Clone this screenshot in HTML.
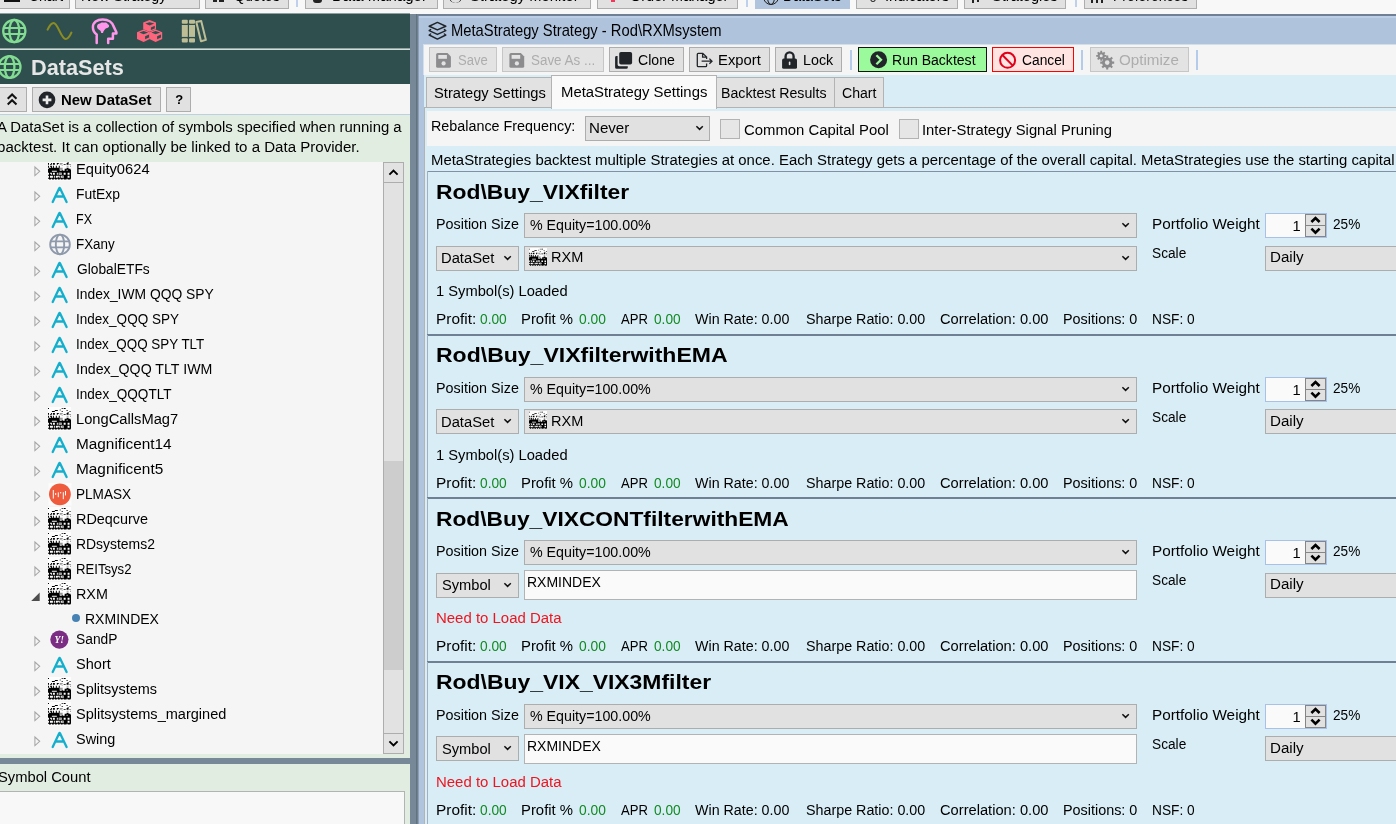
<!DOCTYPE html>
<html lang="en"><head><meta charset="utf-8"><title>MetaStrategy Strategy - Rod\RXMsystem</title>
<style>
html,body{margin:0;padding:0}
body{width:1396px;height:824px;overflow:hidden;position:relative;background:#f8f8f8;font-family:"Liberation Sans",sans-serif;font-size:14.67px;color:#000}
div,span,svg{position:absolute;box-sizing:border-box}
.t{white-space:pre;line-height:20px}
.b{background:#e1e1e1;border:1px solid #adadad}
.bd{background:#e3e3e3;border:1px solid #c6c6c6}
.sep{width:2px;background:#b4cbe9}
.clip{overflow:hidden}
#app{left:0;top:0;width:1396px;height:824px;overflow:hidden;will-change:transform}

</style></head>
<body>
<div id="app">
<!-- top app bar -->
<div class="b" style="left:-5px;top:-20px;width:75px;height:29px;"></div>
<span class="t" style="left:28.6px;top:-14.1px;font-size:14.67px;transform:scaleX(0.9506);transform-origin:0 0;">Chart</span>
<div class="b" style="left:75px;top:-20px;width:125px;height:29px;"></div>
<span class="t" style="left:81.0px;top:-14.1px;font-size:14.67px;transform:scaleX(0.9698);transform-origin:0 0;">New Strategy</span>
<div class="b" style="left:205px;top:-20px;width:84px;height:29px;"></div>
<span class="t" style="left:234.0px;top:-14.1px;font-size:14.67px;transform:scaleX(0.9696);transform-origin:0 0;">Quotes</span>
<div class="b" style="left:305px;top:-20px;width:133px;height:29px;"></div>
<span class="t" style="left:332.0px;top:-14.1px;font-size:14.67px;transform:scaleX(1.0218);transform-origin:0 0;">Data Manager</span>
<div class="b" style="left:443px;top:-20px;width:148px;height:29px;"></div>
<span class="t" style="left:470.3px;top:-14.1px;font-size:14.67px;transform:scaleX(1.0098);transform-origin:0 0;">Strategy Monitor</span>
<div class="b" style="left:597px;top:-20px;width:141px;height:29px;"></div>
<span class="t" style="left:629.5px;top:-14.1px;font-size:14.67px;transform:scaleX(0.9900);transform-origin:0 0;">Order Manager</span>
<div class="b" style="left:755px;top:-20px;width:95px;height:29px;background:#b0c4de;border-color:#b0c4de;"></div>
<span class="t" style="left:783.0px;top:-14.1px;font-size:14.67px;transform:scaleX(0.9668);transform-origin:0 0;">DataSets</span>
<div class="b" style="left:856px;top:-20px;width:102px;height:29px;"></div>
<span class="t" style="left:884.5px;top:-14.1px;font-size:14.67px;transform:scaleX(1.0078);transform-origin:0 0;">Indicators</span>
<div class="b" style="left:964px;top:-20px;width:102px;height:29px;"></div>
<span class="t" style="left:992.0px;top:-14.1px;font-size:14.67px;transform:scaleX(0.9945);transform-origin:0 0;">Strategies</span>
<div class="b" style="left:1084px;top:-20px;width:113px;height:29px;"></div>
<span class="t" style="left:1112.7px;top:-14.1px;font-size:14.67px;transform:scaleX(0.9512);transform-origin:0 0;">Preferences</span>
<div class="sep" style="left:296px;top:-10px;width:2px;height:17px;background:#bfd0ea"></div>
<div class="sep" style="left:746px;top:-10px;width:2px;height:17px;background:#bfd0ea"></div>
<div class="sep" style="left:1075px;top:-10px;width:2px;height:17px;background:#bfd0ea"></div>
<div style="left:4px;top:0px;width:16px;height:2px;background:#111"></div>
<div style="left:213px;top:0px;width:4px;height:2px;background:#222"></div>
<div style="left:219px;top:0px;width:5px;height:2px;background:#222"></div>
<div style="left:313px;top:0px;width:9px;height:3px;background:#222;border-radius:0 0 4px 4px"></div>
<div style="left:611px;top:0px;width:4px;height:2px;background:#f0385a"></div>
<div style="left:763px;top:-11px;width:16px;height:16px;border:1.6px solid #222;border-radius:50%"></div>
<div style="left:767px;top:-11px;width:8px;height:16px;border:1.3px solid #222;border-radius:50%"></div>
<div style="left:449px;top:-9px;width:13px;height:12px;border:1.4px solid #222;border-top:none;border-bottom:none;border-radius:50%"></div>
<div style="left:870px;top:-6px;width:6px;height:8px;border:1.5px solid #222;border-radius:50%"></div>
<div style="left:972px;top:0px;width:1.5px;height:3px;background:#222"></div>
<div style="left:977px;top:0px;width:1.5px;height:2px;background:#222"></div>
<div style="left:1091px;top:0px;width:2px;height:3px;background:#222"></div>
<div style="left:1096px;top:0px;width:2px;height:3px;background:#222"></div>
<div style="left:1101px;top:0px;width:2px;height:3px;background:#222"></div>
<!-- left panel -->
<div style="left:0px;top:13px;width:410px;height:1px;background:#8da0a0"></div>
<div style="left:0px;top:14px;width:410px;height:70px;background:#2f4f4f"></div>
<div style="left:0px;top:48px;width:410px;height:1px;background:#90a4a2"></div>
<div style="left:0px;top:49px;width:410px;height:1px;background:#d3dcd9"></div>
<svg style="left:0;top:14px" width="230" height="70" viewBox="0 14 230 70" fill="none">
<g stroke="#82dc91" stroke-width="2.3"><circle cx="14.3" cy="31" r="11.1"/><ellipse cx="14.3" cy="31" rx="4.9" ry="11.1"/><path d="M4 28H24.6M4 34H24.6" stroke-width="2"/></g>
<path d="M47.6 29.6C49.5 25.6 51.5 23 53.6 23C57.8 23 61.2 39 65.6 39C67.8 39 69.7 36.4 71.4 32.6" stroke="#8c8c22" stroke-width="2.1" stroke-linecap="round"/>
<path d="M96.7 42.9V34.4C94.2 32.6 92.9 30 92.9 27.2C92.9 22.6 97 19.4 102.6 19.4C108.6 19.4 112.6 22.6 113.6 26.4L116.4 32.2V33.4H112.9V38.8H108.2V42.9" stroke="#ff96eb" stroke-width="2.5" stroke-linecap="round" stroke-linejoin="round"/>
<path d="M97 26.6C97 24.6 98.6 23.6 100 23.6C100.8 22.4 103 22.2 104 22.8C105.6 22.2 107.4 23 107.8 24.2C109.4 24.6 109.6 26.8 108.2 27.6C106.8 28.2 105.6 28.4 104.8 29.6C104 30.8 103.4 31 103 33H101.2C101 31.4 100.4 30.6 99.4 30C97.8 29.2 97 28.2 97 26.6Z" fill="#ff96eb"/>
<g fill="#ff647d">
<path fill-rule="evenodd" d="M149.6 20L156 22.5V29.3L149.6 31.8L143.2 29.3V22.5ZM149.6 22.2L145.3 23.6L149.6 25.4L154.2 23.6ZM150.9 27.4V30L154.8 28.6V25.8Z"/>
<path fill-rule="evenodd" d="M143.6 29.6L149.8 32.2V38.9L143.6 42.1L137 38.9V32.2ZM143.6 31L139.3 32.5L143.6 34.2L148.2 32.5ZM145.1 36.2V39.2L149 37.6V34.6Z"/>
<path fill-rule="evenodd" d="M155.6 29.6L162.2 32.2V38.9L155.6 42.1L149.4 38.9V32.2ZM155.6 31L151.3 32.5L155.6 34.2L160.2 32.5ZM157.1 36.2V39.2L161 37.6V34.6Z"/>
</g>
<g fill="#bebe96"><rect x="181.8" y="19.8" width="6" height="3.9" rx="1"/><rect x="181.8" y="25" width="6" height="11.9"/><rect x="181.8" y="38.2" width="6" height="4.3" rx="1"/>
<rect x="189" y="19.8" width="6" height="3.9" rx="1"/><rect x="189" y="25" width="6" height="11.9"/><rect x="189" y="38.2" width="6" height="4.3" rx="1"/></g>
<path d="M196.3 22L201.2 20.9L205.9 39.9L201 41.2Z" stroke="#bebe96" stroke-width="2" stroke-linejoin="round"/>
<g stroke="#82dc91" stroke-width="2.3"><circle cx="9.6" cy="67" r="10.9"/><ellipse cx="9.6" cy="67" rx="4.8" ry="10.9"/><path d="M-1 64H20M-1 70H20" stroke-width="2"/></g>
</svg>
<span class="t" style="left:31.0px;top:58.4px;font-size:21.6px;font-weight:700;color:#e6e6e6;transform:scaleX(1.0054);transform-origin:0 0;">DataSets</span>
<div style="left:0px;top:84px;width:410px;height:30px;background:#f5f5f5"></div>
<div class="b" style="left:-5px;top:87px;width:32px;height:25px;"></div>
<div class="b" style="left:32px;top:87px;width:129px;height:25px;"></div>
<div class="b" style="left:166px;top:87px;width:25px;height:25px;"></div>
<svg style="left:0;top:84px" width="200" height="30" viewBox="0 84 200 30" fill="none">
<path d="M7.7 98.8L12.1 94.5L16.5 98.8M7.7 104.5L12.1 100.2L16.5 104.5" stroke="#111" stroke-width="2"/>
<circle cx="47" cy="99.9" r="8.3" fill="#212529"/><path d="M42.6 99.9H51.4M47 95.5V104.3" stroke="#e9e9e9" stroke-width="2.6"/>
</svg>
<span class="t" style="left:60.8px;top:89.8px;font-size:14.67px;font-weight:700;transform:scaleX(1.0191);transform-origin:0 0;">New DataSet</span>
<span class="t" style="left:175.2px;top:89.8px;font-size:13px;font-weight:700;">?</span>
<div style="left:0px;top:114px;width:410px;height:1px;background:#bcd0e2"></div>
<div style="left:0px;top:115px;width:410px;height:709px;background:#e1ede1"></div>
<span class="t" style="left:-3.0px;top:117.1px;font-size:14.67px;transform:scaleX(1.0157);transform-origin:0 0;">A DataSet is a collection of symbols specified when running a</span>
<span class="t" style="left:-2.6px;top:137.1px;font-size:14.67px;transform:scaleX(1.0282);transform-origin:0 0;">backtest. It can optionally be linked to a Data Provider.</span>
<!-- dataset tree -->
<div style="left:0px;top:162px;width:405px;height:592px;background:#e8e8e8"></div>
<div style="left:0px;top:162px;width:383px;height:592px;background:#f5f5f5;overflow:hidden"><svg width="10" height="14" viewBox="0 0 10 14" fill="none" style="left:33px;top:2.0px"><path d="M1.9 3V11.6L6.7 7.3Z" stroke="#a6a6a6" stroke-width="1.05"/></svg><svg width="23.5" height="23.6" viewBox="0 0 24 24" preserveAspectRatio="none" style="left:47.6px;top:-5.0px"><rect width="24" height="24" fill="#fdfdfd"/><path fill="#000" d="M0 1h1v1h-1zM14 1h1v1h-1zM16 1h2v1h-2zM7 3h3v1h-3zM19 3h1v1h-1zM4 4h3v1h-3zM14 4h1v1h-1zM22 4h1v1h-1zM20 5h1v1h-1zM0 6h1v1h-1zM3 6h1v1h-1zM5 6h2v1h-2zM9 6h2v1h-2zM19 6h2v1h-2zM0 7h1v1h-1zM2 7h2v1h-2zM5 7h2v1h-2zM9 7h1v1h-1zM16 7h2v1h-2zM19 7h2v1h-2zM22 7h1v1h-1zM0 9h1v1h-1zM2 9h2v1h-2zM5 9h1v1h-1zM8 9h1v1h-1zM11 9h1v1h-1zM23 9h1v1h-1zM0 10h1v1h-1zM3 10h1v1h-1zM5 10h1v1h-1zM8 10h1v1h-1zM11 10h1v1h-1zM1 11h11v1h-11zM19 11h2v1h-2zM0 12h12v1h-12zM17 12h6v1h-6zM0 13h12v1h-12zM14 13h1v1h-1zM17 13h2v1h-2zM20 13h4v1h-4zM0 14h4v1h-4zM9 14h15v1h-15zM0 15h24v1h-24zM1 16h1v1h-1zM4 16h1v1h-1zM7 16h2v1h-2zM10 16h1v1h-1zM14 16h2v1h-2zM18 16h2v1h-2zM22 16h2v1h-2zM1 17h2v1h-2zM4 17h1v1h-1zM7 17h2v1h-2zM10 17h1v1h-1zM14 17h2v1h-2zM18 17h2v1h-2zM22 17h2v1h-2zM0 18h24v1h-24zM1 19h1v1h-1zM5 19h1v1h-1zM7 19h1v1h-1zM12 19h1v1h-1zM16 19h4v1h-4zM22 19h2v1h-2zM1 20h1v1h-1zM5 20h1v1h-1zM7 20h1v1h-1zM10 20h1v1h-1zM12 20h1v1h-1zM16 20h4v1h-4zM22 20h2v1h-2zM0 21h24v1h-24zM1 22h2v1h-2zM4 22h2v1h-2zM7 22h2v1h-2zM10 22h2v1h-2zM13 22h2v1h-2zM16 22h3v1h-3zM20 22h3v1h-3z"/><path fill="#999" d="M12 2h1v1h-1zM12 3h1v1h-1zM12 6h3v1h-3zM12 7h2v1h-2zM14 8h1v1h-1zM19 9h2v1h-2zM12 11h3v1h-3zM12 12h3v1h-3zM13 13h1v1h-1zM11 16h3v1h-3zM11 17h3v1h-3zM14 19h2v1h-2zM14 20h2v1h-2z"/></svg><span class="t" style="left:75.5px;top:-3.1px;font-size:14.67px;transform:scaleX(1.0029);transform-origin:0 0;">Equity0624</span><svg width="10" height="14" viewBox="0 0 10 14" fill="none" style="left:33px;top:27.0px"><path d="M1.9 3V11.6L6.7 7.3Z" stroke="#a6a6a6" stroke-width="1.05"/></svg><svg width="24" height="24" viewBox="0 0 24 24" fill="none" style="left:47.7px;top:20.1px"><path d="M4.7 20L11.1 6.6Q11.6 5.4 12.1 6.6L18.6 20M7.8 14.5H15.4" stroke="#14afcd" stroke-width="2.3" stroke-linecap="round" stroke-linejoin="round"/></svg><span class="t" style="left:75.6px;top:21.9px;font-size:14.67px;transform:scaleX(0.9475);transform-origin:0 0;">FutExp</span><svg width="10" height="14" viewBox="0 0 10 14" fill="none" style="left:33px;top:52.0px"><path d="M1.9 3V11.6L6.7 7.3Z" stroke="#a6a6a6" stroke-width="1.05"/></svg><svg width="24" height="24" viewBox="0 0 24 24" fill="none" style="left:47.7px;top:45.1px"><path d="M4.7 20L11.1 6.6Q11.6 5.4 12.1 6.6L18.6 20M7.8 14.5H15.4" stroke="#14afcd" stroke-width="2.3" stroke-linecap="round" stroke-linejoin="round"/></svg><span class="t" style="left:75.6px;top:46.9px;font-size:14.67px;transform:scaleX(0.8522);transform-origin:0 0;">FX</span><svg width="10" height="14" viewBox="0 0 10 14" fill="none" style="left:33px;top:77.0px"><path d="M1.9 3V11.6L6.7 7.3Z" stroke="#a6a6a6" stroke-width="1.05"/></svg><svg width="24" height="24" viewBox="0 0 24 24" fill="none" style="left:47.5px;top:70.0px"><g stroke="#8e9aab" stroke-width="1.9"><circle cx="12" cy="12.4" r="9.8"/><ellipse cx="12" cy="12.4" rx="4.2" ry="9.8"/><path d="M2.8 9.4H21.2M2.8 15.4H21.2"/></g></svg><span class="t" style="left:75.6px;top:71.9px;font-size:14.67px;transform:scaleX(0.9136);transform-origin:0 0;">FXany</span><svg width="10" height="14" viewBox="0 0 10 14" fill="none" style="left:33px;top:102.0px"><path d="M1.9 3V11.6L6.7 7.3Z" stroke="#a6a6a6" stroke-width="1.05"/></svg><svg width="24" height="24" viewBox="0 0 24 24" fill="none" style="left:47.7px;top:95.1px"><path d="M4.7 20L11.1 6.6Q11.6 5.4 12.1 6.6L18.6 20M7.8 14.5H15.4" stroke="#14afcd" stroke-width="2.3" stroke-linecap="round" stroke-linejoin="round"/></svg><span class="t" style="left:76.5px;top:96.9px;font-size:14.67px;transform:scaleX(0.9397);transform-origin:0 0;">GlobalETFs</span><svg width="10" height="14" viewBox="0 0 10 14" fill="none" style="left:33px;top:127.0px"><path d="M1.9 3V11.6L6.7 7.3Z" stroke="#a6a6a6" stroke-width="1.05"/></svg><svg width="24" height="24" viewBox="0 0 24 24" fill="none" style="left:47.7px;top:120.1px"><path d="M4.7 20L11.1 6.6Q11.6 5.4 12.1 6.6L18.6 20M7.8 14.5H15.4" stroke="#14afcd" stroke-width="2.3" stroke-linecap="round" stroke-linejoin="round"/></svg><span class="t" style="left:75.6px;top:121.9px;font-size:14.67px;transform:scaleX(0.9454);transform-origin:0 0;">Index_IWM QQQ SPY</span><svg width="10" height="14" viewBox="0 0 10 14" fill="none" style="left:33px;top:152.0px"><path d="M1.9 3V11.6L6.7 7.3Z" stroke="#a6a6a6" stroke-width="1.05"/></svg><svg width="24" height="24" viewBox="0 0 24 24" fill="none" style="left:47.7px;top:145.1px"><path d="M4.7 20L11.1 6.6Q11.6 5.4 12.1 6.6L18.6 20M7.8 14.5H15.4" stroke="#14afcd" stroke-width="2.3" stroke-linecap="round" stroke-linejoin="round"/></svg><span class="t" style="left:75.6px;top:146.9px;font-size:14.67px;transform:scaleX(0.9231);transform-origin:0 0;">Index_QQQ SPY</span><svg width="10" height="14" viewBox="0 0 10 14" fill="none" style="left:33px;top:177.0px"><path d="M1.9 3V11.6L6.7 7.3Z" stroke="#a6a6a6" stroke-width="1.05"/></svg><svg width="24" height="24" viewBox="0 0 24 24" fill="none" style="left:47.7px;top:170.1px"><path d="M4.7 20L11.1 6.6Q11.6 5.4 12.1 6.6L18.6 20M7.8 14.5H15.4" stroke="#14afcd" stroke-width="2.3" stroke-linecap="round" stroke-linejoin="round"/></svg><span class="t" style="left:75.6px;top:171.9px;font-size:14.67px;transform:scaleX(0.9156);transform-origin:0 0;">Index_QQQ SPY TLT</span><svg width="10" height="14" viewBox="0 0 10 14" fill="none" style="left:33px;top:202.0px"><path d="M1.9 3V11.6L6.7 7.3Z" stroke="#a6a6a6" stroke-width="1.05"/></svg><svg width="24" height="24" viewBox="0 0 24 24" fill="none" style="left:47.7px;top:195.1px"><path d="M4.7 20L11.1 6.6Q11.6 5.4 12.1 6.6L18.6 20M7.8 14.5H15.4" stroke="#14afcd" stroke-width="2.3" stroke-linecap="round" stroke-linejoin="round"/></svg><span class="t" style="left:75.5px;top:196.9px;font-size:14.67px;transform:scaleX(0.9675);transform-origin:0 0;">Index_QQQ TLT IWM</span><svg width="10" height="14" viewBox="0 0 10 14" fill="none" style="left:33px;top:227.0px"><path d="M1.9 3V11.6L6.7 7.3Z" stroke="#a6a6a6" stroke-width="1.05"/></svg><svg width="24" height="24" viewBox="0 0 24 24" fill="none" style="left:47.7px;top:220.1px"><path d="M4.7 20L11.1 6.6Q11.6 5.4 12.1 6.6L18.6 20M7.8 14.5H15.4" stroke="#14afcd" stroke-width="2.3" stroke-linecap="round" stroke-linejoin="round"/></svg><span class="t" style="left:75.6px;top:221.9px;font-size:14.67px;transform:scaleX(0.9255);transform-origin:0 0;">Index_QQQTLT</span><svg width="10" height="14" viewBox="0 0 10 14" fill="none" style="left:33px;top:252.0px"><path d="M1.9 3V11.6L6.7 7.3Z" stroke="#a6a6a6" stroke-width="1.05"/></svg><svg width="23.5" height="23.6" viewBox="0 0 24 24" preserveAspectRatio="none" style="left:47.6px;top:245.0px"><rect width="24" height="24" fill="#fdfdfd"/><path fill="#000" d="M0 1h1v1h-1zM14 1h1v1h-1zM16 1h2v1h-2zM7 3h3v1h-3zM19 3h1v1h-1zM4 4h3v1h-3zM14 4h1v1h-1zM22 4h1v1h-1zM20 5h1v1h-1zM0 6h1v1h-1zM3 6h1v1h-1zM5 6h2v1h-2zM9 6h2v1h-2zM19 6h2v1h-2zM0 7h1v1h-1zM2 7h2v1h-2zM5 7h2v1h-2zM9 7h1v1h-1zM16 7h2v1h-2zM19 7h2v1h-2zM22 7h1v1h-1zM0 9h1v1h-1zM2 9h2v1h-2zM5 9h1v1h-1zM8 9h1v1h-1zM11 9h1v1h-1zM23 9h1v1h-1zM0 10h1v1h-1zM3 10h1v1h-1zM5 10h1v1h-1zM8 10h1v1h-1zM11 10h1v1h-1zM1 11h11v1h-11zM19 11h2v1h-2zM0 12h12v1h-12zM17 12h6v1h-6zM0 13h12v1h-12zM14 13h1v1h-1zM17 13h2v1h-2zM20 13h4v1h-4zM0 14h4v1h-4zM9 14h15v1h-15zM0 15h24v1h-24zM1 16h1v1h-1zM4 16h1v1h-1zM7 16h2v1h-2zM10 16h1v1h-1zM14 16h2v1h-2zM18 16h2v1h-2zM22 16h2v1h-2zM1 17h2v1h-2zM4 17h1v1h-1zM7 17h2v1h-2zM10 17h1v1h-1zM14 17h2v1h-2zM18 17h2v1h-2zM22 17h2v1h-2zM0 18h24v1h-24zM1 19h1v1h-1zM5 19h1v1h-1zM7 19h1v1h-1zM12 19h1v1h-1zM16 19h4v1h-4zM22 19h2v1h-2zM1 20h1v1h-1zM5 20h1v1h-1zM7 20h1v1h-1zM10 20h1v1h-1zM12 20h1v1h-1zM16 20h4v1h-4zM22 20h2v1h-2zM0 21h24v1h-24zM1 22h2v1h-2zM4 22h2v1h-2zM7 22h2v1h-2zM10 22h2v1h-2zM13 22h2v1h-2zM16 22h3v1h-3zM20 22h3v1h-3z"/><path fill="#999" d="M12 2h1v1h-1zM12 3h1v1h-1zM12 6h3v1h-3zM12 7h2v1h-2zM14 8h1v1h-1zM19 9h2v1h-2zM12 11h3v1h-3zM12 12h3v1h-3zM13 13h1v1h-1zM11 16h3v1h-3zM11 17h3v1h-3zM14 19h2v1h-2zM14 20h2v1h-2z"/></svg><span class="t" style="left:75.5px;top:246.9px;font-size:14.67px;transform:scaleX(1.0031);transform-origin:0 0;">LongCallsMag7</span><svg width="10" height="14" viewBox="0 0 10 14" fill="none" style="left:33px;top:277.0px"><path d="M1.9 3V11.6L6.7 7.3Z" stroke="#a6a6a6" stroke-width="1.05"/></svg><svg width="24" height="24" viewBox="0 0 24 24" fill="none" style="left:47.7px;top:270.1px"><path d="M4.7 20L11.1 6.6Q11.6 5.4 12.1 6.6L18.6 20M7.8 14.5H15.4" stroke="#14afcd" stroke-width="2.3" stroke-linecap="round" stroke-linejoin="round"/></svg><span class="t" style="left:75.5px;top:271.9px;font-size:14.67px;transform:scaleX(1.0477);transform-origin:0 0;">Magnificent14</span><svg width="10" height="14" viewBox="0 0 10 14" fill="none" style="left:33px;top:302.0px"><path d="M1.9 3V11.6L6.7 7.3Z" stroke="#a6a6a6" stroke-width="1.05"/></svg><svg width="24" height="24" viewBox="0 0 24 24" fill="none" style="left:47.7px;top:295.1px"><path d="M4.7 20L11.1 6.6Q11.6 5.4 12.1 6.6L18.6 20M7.8 14.5H15.4" stroke="#14afcd" stroke-width="2.3" stroke-linecap="round" stroke-linejoin="round"/></svg><span class="t" style="left:75.5px;top:296.9px;font-size:14.67px;transform:scaleX(1.0494);transform-origin:0 0;">Magnificent5</span><svg width="10" height="14" viewBox="0 0 10 14" fill="none" style="left:33px;top:327.0px"><path d="M1.9 3V11.6L6.7 7.3Z" stroke="#a6a6a6" stroke-width="1.05"/></svg><svg width="24" height="24" viewBox="0 0 24 24" style="left:47.5px;top:320.0px"><rect x=".5" y="1" width="23" height="22.6" fill="#fbfbfb"/><circle cx="11.9" cy="12.3" r="10.9" fill="#ee5b3d"/><path d="M5.3 8V16.6M7.7 11V13M10.3 10.4V15.2M12.7 10V11.4M15.3 10.2V17.2M17.5 9V13.4" stroke="#fff" stroke-width="1"/></svg><span class="t" style="left:75.6px;top:321.9px;font-size:14.67px;transform:scaleX(0.9270);transform-origin:0 0;">PLMASX</span><svg width="10" height="14" viewBox="0 0 10 14" fill="none" style="left:33px;top:352.0px"><path d="M1.9 3V11.6L6.7 7.3Z" stroke="#a6a6a6" stroke-width="1.05"/></svg><svg width="23.5" height="23.6" viewBox="0 0 24 24" preserveAspectRatio="none" style="left:47.6px;top:345.0px"><rect width="24" height="24" fill="#fdfdfd"/><path fill="#000" d="M0 1h1v1h-1zM14 1h1v1h-1zM16 1h2v1h-2zM7 3h3v1h-3zM19 3h1v1h-1zM4 4h3v1h-3zM14 4h1v1h-1zM22 4h1v1h-1zM20 5h1v1h-1zM0 6h1v1h-1zM3 6h1v1h-1zM5 6h2v1h-2zM9 6h2v1h-2zM19 6h2v1h-2zM0 7h1v1h-1zM2 7h2v1h-2zM5 7h2v1h-2zM9 7h1v1h-1zM16 7h2v1h-2zM19 7h2v1h-2zM22 7h1v1h-1zM0 9h1v1h-1zM2 9h2v1h-2zM5 9h1v1h-1zM8 9h1v1h-1zM11 9h1v1h-1zM23 9h1v1h-1zM0 10h1v1h-1zM3 10h1v1h-1zM5 10h1v1h-1zM8 10h1v1h-1zM11 10h1v1h-1zM1 11h11v1h-11zM19 11h2v1h-2zM0 12h12v1h-12zM17 12h6v1h-6zM0 13h12v1h-12zM14 13h1v1h-1zM17 13h2v1h-2zM20 13h4v1h-4zM0 14h4v1h-4zM9 14h15v1h-15zM0 15h24v1h-24zM1 16h1v1h-1zM4 16h1v1h-1zM7 16h2v1h-2zM10 16h1v1h-1zM14 16h2v1h-2zM18 16h2v1h-2zM22 16h2v1h-2zM1 17h2v1h-2zM4 17h1v1h-1zM7 17h2v1h-2zM10 17h1v1h-1zM14 17h2v1h-2zM18 17h2v1h-2zM22 17h2v1h-2zM0 18h24v1h-24zM1 19h1v1h-1zM5 19h1v1h-1zM7 19h1v1h-1zM12 19h1v1h-1zM16 19h4v1h-4zM22 19h2v1h-2zM1 20h1v1h-1zM5 20h1v1h-1zM7 20h1v1h-1zM10 20h1v1h-1zM12 20h1v1h-1zM16 20h4v1h-4zM22 20h2v1h-2zM0 21h24v1h-24zM1 22h2v1h-2zM4 22h2v1h-2zM7 22h2v1h-2zM10 22h2v1h-2zM13 22h2v1h-2zM16 22h3v1h-3zM20 22h3v1h-3z"/><path fill="#999" d="M12 2h1v1h-1zM12 3h1v1h-1zM12 6h3v1h-3zM12 7h2v1h-2zM14 8h1v1h-1zM19 9h2v1h-2zM12 11h3v1h-3zM12 12h3v1h-3zM13 13h1v1h-1zM11 16h3v1h-3zM11 17h3v1h-3zM14 19h2v1h-2zM14 20h2v1h-2z"/></svg><span class="t" style="left:75.5px;top:346.9px;font-size:14.67px;transform:scaleX(0.9826);transform-origin:0 0;">RDeqcurve</span><svg width="10" height="14" viewBox="0 0 10 14" fill="none" style="left:33px;top:377.0px"><path d="M1.9 3V11.6L6.7 7.3Z" stroke="#a6a6a6" stroke-width="1.05"/></svg><svg width="23.5" height="23.6" viewBox="0 0 24 24" preserveAspectRatio="none" style="left:47.6px;top:370.0px"><rect width="24" height="24" fill="#fdfdfd"/><path fill="#000" d="M0 1h1v1h-1zM14 1h1v1h-1zM16 1h2v1h-2zM7 3h3v1h-3zM19 3h1v1h-1zM4 4h3v1h-3zM14 4h1v1h-1zM22 4h1v1h-1zM20 5h1v1h-1zM0 6h1v1h-1zM3 6h1v1h-1zM5 6h2v1h-2zM9 6h2v1h-2zM19 6h2v1h-2zM0 7h1v1h-1zM2 7h2v1h-2zM5 7h2v1h-2zM9 7h1v1h-1zM16 7h2v1h-2zM19 7h2v1h-2zM22 7h1v1h-1zM0 9h1v1h-1zM2 9h2v1h-2zM5 9h1v1h-1zM8 9h1v1h-1zM11 9h1v1h-1zM23 9h1v1h-1zM0 10h1v1h-1zM3 10h1v1h-1zM5 10h1v1h-1zM8 10h1v1h-1zM11 10h1v1h-1zM1 11h11v1h-11zM19 11h2v1h-2zM0 12h12v1h-12zM17 12h6v1h-6zM0 13h12v1h-12zM14 13h1v1h-1zM17 13h2v1h-2zM20 13h4v1h-4zM0 14h4v1h-4zM9 14h15v1h-15zM0 15h24v1h-24zM1 16h1v1h-1zM4 16h1v1h-1zM7 16h2v1h-2zM10 16h1v1h-1zM14 16h2v1h-2zM18 16h2v1h-2zM22 16h2v1h-2zM1 17h2v1h-2zM4 17h1v1h-1zM7 17h2v1h-2zM10 17h1v1h-1zM14 17h2v1h-2zM18 17h2v1h-2zM22 17h2v1h-2zM0 18h24v1h-24zM1 19h1v1h-1zM5 19h1v1h-1zM7 19h1v1h-1zM12 19h1v1h-1zM16 19h4v1h-4zM22 19h2v1h-2zM1 20h1v1h-1zM5 20h1v1h-1zM7 20h1v1h-1zM10 20h1v1h-1zM12 20h1v1h-1zM16 20h4v1h-4zM22 20h2v1h-2zM0 21h24v1h-24zM1 22h2v1h-2zM4 22h2v1h-2zM7 22h2v1h-2zM10 22h2v1h-2zM13 22h2v1h-2zM16 22h3v1h-3zM20 22h3v1h-3z"/><path fill="#999" d="M12 2h1v1h-1zM12 3h1v1h-1zM12 6h3v1h-3zM12 7h2v1h-2zM14 8h1v1h-1zM19 9h2v1h-2zM12 11h3v1h-3zM12 12h3v1h-3zM13 13h1v1h-1zM11 16h3v1h-3zM11 17h3v1h-3zM14 19h2v1h-2zM14 20h2v1h-2z"/></svg><span class="t" style="left:75.6px;top:371.9px;font-size:14.67px;transform:scaleX(0.9498);transform-origin:0 0;">RDsystems2</span><svg width="10" height="14" viewBox="0 0 10 14" fill="none" style="left:33px;top:402.0px"><path d="M1.9 3V11.6L6.7 7.3Z" stroke="#a6a6a6" stroke-width="1.05"/></svg><svg width="23.5" height="23.6" viewBox="0 0 24 24" preserveAspectRatio="none" style="left:47.6px;top:395.0px"><rect width="24" height="24" fill="#fdfdfd"/><path fill="#000" d="M0 1h1v1h-1zM14 1h1v1h-1zM16 1h2v1h-2zM7 3h3v1h-3zM19 3h1v1h-1zM4 4h3v1h-3zM14 4h1v1h-1zM22 4h1v1h-1zM20 5h1v1h-1zM0 6h1v1h-1zM3 6h1v1h-1zM5 6h2v1h-2zM9 6h2v1h-2zM19 6h2v1h-2zM0 7h1v1h-1zM2 7h2v1h-2zM5 7h2v1h-2zM9 7h1v1h-1zM16 7h2v1h-2zM19 7h2v1h-2zM22 7h1v1h-1zM0 9h1v1h-1zM2 9h2v1h-2zM5 9h1v1h-1zM8 9h1v1h-1zM11 9h1v1h-1zM23 9h1v1h-1zM0 10h1v1h-1zM3 10h1v1h-1zM5 10h1v1h-1zM8 10h1v1h-1zM11 10h1v1h-1zM1 11h11v1h-11zM19 11h2v1h-2zM0 12h12v1h-12zM17 12h6v1h-6zM0 13h12v1h-12zM14 13h1v1h-1zM17 13h2v1h-2zM20 13h4v1h-4zM0 14h4v1h-4zM9 14h15v1h-15zM0 15h24v1h-24zM1 16h1v1h-1zM4 16h1v1h-1zM7 16h2v1h-2zM10 16h1v1h-1zM14 16h2v1h-2zM18 16h2v1h-2zM22 16h2v1h-2zM1 17h2v1h-2zM4 17h1v1h-1zM7 17h2v1h-2zM10 17h1v1h-1zM14 17h2v1h-2zM18 17h2v1h-2zM22 17h2v1h-2zM0 18h24v1h-24zM1 19h1v1h-1zM5 19h1v1h-1zM7 19h1v1h-1zM12 19h1v1h-1zM16 19h4v1h-4zM22 19h2v1h-2zM1 20h1v1h-1zM5 20h1v1h-1zM7 20h1v1h-1zM10 20h1v1h-1zM12 20h1v1h-1zM16 20h4v1h-4zM22 20h2v1h-2zM0 21h24v1h-24zM1 22h2v1h-2zM4 22h2v1h-2zM7 22h2v1h-2zM10 22h2v1h-2zM13 22h2v1h-2zM16 22h3v1h-3zM20 22h3v1h-3z"/><path fill="#999" d="M12 2h1v1h-1zM12 3h1v1h-1zM12 6h3v1h-3zM12 7h2v1h-2zM14 8h1v1h-1zM19 9h2v1h-2zM12 11h3v1h-3zM12 12h3v1h-3zM13 13h1v1h-1zM11 16h3v1h-3zM11 17h3v1h-3zM14 19h2v1h-2zM14 20h2v1h-2z"/></svg><span class="t" style="left:75.6px;top:396.9px;font-size:14.67px;transform:scaleX(0.8956);transform-origin:0 0;">REITsys2</span><svg width="12" height="12" viewBox="0 0 12 12" style="left:30px;top:428.5px"><path d="M9.7 1.6V10.1H1.2Z" fill="#4d4d4d"/></svg><svg width="23.5" height="23.6" viewBox="0 0 24 24" preserveAspectRatio="none" style="left:47.6px;top:420.0px"><rect width="24" height="24" fill="#fdfdfd"/><path fill="#000" d="M0 1h1v1h-1zM14 1h1v1h-1zM16 1h2v1h-2zM7 3h3v1h-3zM19 3h1v1h-1zM4 4h3v1h-3zM14 4h1v1h-1zM22 4h1v1h-1zM20 5h1v1h-1zM0 6h1v1h-1zM3 6h1v1h-1zM5 6h2v1h-2zM9 6h2v1h-2zM19 6h2v1h-2zM0 7h1v1h-1zM2 7h2v1h-2zM5 7h2v1h-2zM9 7h1v1h-1zM16 7h2v1h-2zM19 7h2v1h-2zM22 7h1v1h-1zM0 9h1v1h-1zM2 9h2v1h-2zM5 9h1v1h-1zM8 9h1v1h-1zM11 9h1v1h-1zM23 9h1v1h-1zM0 10h1v1h-1zM3 10h1v1h-1zM5 10h1v1h-1zM8 10h1v1h-1zM11 10h1v1h-1zM1 11h11v1h-11zM19 11h2v1h-2zM0 12h12v1h-12zM17 12h6v1h-6zM0 13h12v1h-12zM14 13h1v1h-1zM17 13h2v1h-2zM20 13h4v1h-4zM0 14h4v1h-4zM9 14h15v1h-15zM0 15h24v1h-24zM1 16h1v1h-1zM4 16h1v1h-1zM7 16h2v1h-2zM10 16h1v1h-1zM14 16h2v1h-2zM18 16h2v1h-2zM22 16h2v1h-2zM1 17h2v1h-2zM4 17h1v1h-1zM7 17h2v1h-2zM10 17h1v1h-1zM14 17h2v1h-2zM18 17h2v1h-2zM22 17h2v1h-2zM0 18h24v1h-24zM1 19h1v1h-1zM5 19h1v1h-1zM7 19h1v1h-1zM12 19h1v1h-1zM16 19h4v1h-4zM22 19h2v1h-2zM1 20h1v1h-1zM5 20h1v1h-1zM7 20h1v1h-1zM10 20h1v1h-1zM12 20h1v1h-1zM16 20h4v1h-4zM22 20h2v1h-2zM0 21h24v1h-24zM1 22h2v1h-2zM4 22h2v1h-2zM7 22h2v1h-2zM10 22h2v1h-2zM13 22h2v1h-2zM16 22h3v1h-3zM20 22h3v1h-3z"/><path fill="#999" d="M12 2h1v1h-1zM12 3h1v1h-1zM12 6h3v1h-3zM12 7h2v1h-2zM14 8h1v1h-1zM19 9h2v1h-2zM12 11h3v1h-3zM12 12h3v1h-3zM13 13h1v1h-1zM11 16h3v1h-3zM11 17h3v1h-3zM14 19h2v1h-2zM14 20h2v1h-2z"/></svg><span class="t" style="left:75.5px;top:421.9px;font-size:14.67px;transform:scaleX(0.9783);transform-origin:0 0;">RXM</span><div style="left:71.9px;top:452.4px;width:8px;height:8px;border-radius:50%;background:#4682b4"></div><span class="t" style="left:85.0px;top:446.9px;font-size:14.67px;transform:scaleX(0.9558);transform-origin:0 0;">RXMINDEX</span><svg width="10" height="14" viewBox="0 0 10 14" fill="none" style="left:33px;top:472.0px"><path d="M1.9 3V11.6L6.7 7.3Z" stroke="#a6a6a6" stroke-width="1.05"/></svg><svg width="24" height="24" viewBox="0 0 24 24" style="left:47.5px;top:465.0px"><circle cx="11.4" cy="12.6" r="9.1" fill="#7b2d84"/><text x="6.4" y="15.8" font-family="Liberation Serif, serif" font-weight="700" font-size="9.5" font-style="italic" fill="#fff">Y!</text></svg><span class="t" style="left:76.0px;top:466.9px;font-size:14.67px;transform:scaleX(0.9415);transform-origin:0 0;">SandP</span><svg width="10" height="14" viewBox="0 0 10 14" fill="none" style="left:33px;top:497.0px"><path d="M1.9 3V11.6L6.7 7.3Z" stroke="#a6a6a6" stroke-width="1.05"/></svg><svg width="24" height="24" viewBox="0 0 24 24" fill="none" style="left:47.7px;top:490.1px"><path d="M4.7 20L11.1 6.6Q11.6 5.4 12.1 6.6L18.6 20M7.8 14.5H15.4" stroke="#14afcd" stroke-width="2.3" stroke-linecap="round" stroke-linejoin="round"/></svg><span class="t" style="left:76.0px;top:491.9px;font-size:14.67px;transform:scaleX(0.9926);transform-origin:0 0;">Short</span><svg width="10" height="14" viewBox="0 0 10 14" fill="none" style="left:33px;top:522.0px"><path d="M1.9 3V11.6L6.7 7.3Z" stroke="#a6a6a6" stroke-width="1.05"/></svg><svg width="23.5" height="23.6" viewBox="0 0 24 24" preserveAspectRatio="none" style="left:47.6px;top:515.0px"><rect width="24" height="24" fill="#fdfdfd"/><path fill="#000" d="M0 1h1v1h-1zM14 1h1v1h-1zM16 1h2v1h-2zM7 3h3v1h-3zM19 3h1v1h-1zM4 4h3v1h-3zM14 4h1v1h-1zM22 4h1v1h-1zM20 5h1v1h-1zM0 6h1v1h-1zM3 6h1v1h-1zM5 6h2v1h-2zM9 6h2v1h-2zM19 6h2v1h-2zM0 7h1v1h-1zM2 7h2v1h-2zM5 7h2v1h-2zM9 7h1v1h-1zM16 7h2v1h-2zM19 7h2v1h-2zM22 7h1v1h-1zM0 9h1v1h-1zM2 9h2v1h-2zM5 9h1v1h-1zM8 9h1v1h-1zM11 9h1v1h-1zM23 9h1v1h-1zM0 10h1v1h-1zM3 10h1v1h-1zM5 10h1v1h-1zM8 10h1v1h-1zM11 10h1v1h-1zM1 11h11v1h-11zM19 11h2v1h-2zM0 12h12v1h-12zM17 12h6v1h-6zM0 13h12v1h-12zM14 13h1v1h-1zM17 13h2v1h-2zM20 13h4v1h-4zM0 14h4v1h-4zM9 14h15v1h-15zM0 15h24v1h-24zM1 16h1v1h-1zM4 16h1v1h-1zM7 16h2v1h-2zM10 16h1v1h-1zM14 16h2v1h-2zM18 16h2v1h-2zM22 16h2v1h-2zM1 17h2v1h-2zM4 17h1v1h-1zM7 17h2v1h-2zM10 17h1v1h-1zM14 17h2v1h-2zM18 17h2v1h-2zM22 17h2v1h-2zM0 18h24v1h-24zM1 19h1v1h-1zM5 19h1v1h-1zM7 19h1v1h-1zM12 19h1v1h-1zM16 19h4v1h-4zM22 19h2v1h-2zM1 20h1v1h-1zM5 20h1v1h-1zM7 20h1v1h-1zM10 20h1v1h-1zM12 20h1v1h-1zM16 20h4v1h-4zM22 20h2v1h-2zM0 21h24v1h-24zM1 22h2v1h-2zM4 22h2v1h-2zM7 22h2v1h-2zM10 22h2v1h-2zM13 22h2v1h-2zM16 22h3v1h-3zM20 22h3v1h-3z"/><path fill="#999" d="M12 2h1v1h-1zM12 3h1v1h-1zM12 6h3v1h-3zM12 7h2v1h-2zM14 8h1v1h-1zM19 9h2v1h-2zM12 11h3v1h-3zM12 12h3v1h-3zM13 13h1v1h-1zM11 16h3v1h-3zM11 17h3v1h-3zM14 19h2v1h-2zM14 20h2v1h-2z"/></svg><span class="t" style="left:76.0px;top:516.9px;font-size:14.67px;transform:scaleX(0.9850);transform-origin:0 0;">Splitsystems</span><svg width="10" height="14" viewBox="0 0 10 14" fill="none" style="left:33px;top:547.0px"><path d="M1.9 3V11.6L6.7 7.3Z" stroke="#a6a6a6" stroke-width="1.05"/></svg><svg width="23.5" height="23.6" viewBox="0 0 24 24" preserveAspectRatio="none" style="left:47.6px;top:540.0px"><rect width="24" height="24" fill="#fdfdfd"/><path fill="#000" d="M0 1h1v1h-1zM14 1h1v1h-1zM16 1h2v1h-2zM7 3h3v1h-3zM19 3h1v1h-1zM4 4h3v1h-3zM14 4h1v1h-1zM22 4h1v1h-1zM20 5h1v1h-1zM0 6h1v1h-1zM3 6h1v1h-1zM5 6h2v1h-2zM9 6h2v1h-2zM19 6h2v1h-2zM0 7h1v1h-1zM2 7h2v1h-2zM5 7h2v1h-2zM9 7h1v1h-1zM16 7h2v1h-2zM19 7h2v1h-2zM22 7h1v1h-1zM0 9h1v1h-1zM2 9h2v1h-2zM5 9h1v1h-1zM8 9h1v1h-1zM11 9h1v1h-1zM23 9h1v1h-1zM0 10h1v1h-1zM3 10h1v1h-1zM5 10h1v1h-1zM8 10h1v1h-1zM11 10h1v1h-1zM1 11h11v1h-11zM19 11h2v1h-2zM0 12h12v1h-12zM17 12h6v1h-6zM0 13h12v1h-12zM14 13h1v1h-1zM17 13h2v1h-2zM20 13h4v1h-4zM0 14h4v1h-4zM9 14h15v1h-15zM0 15h24v1h-24zM1 16h1v1h-1zM4 16h1v1h-1zM7 16h2v1h-2zM10 16h1v1h-1zM14 16h2v1h-2zM18 16h2v1h-2zM22 16h2v1h-2zM1 17h2v1h-2zM4 17h1v1h-1zM7 17h2v1h-2zM10 17h1v1h-1zM14 17h2v1h-2zM18 17h2v1h-2zM22 17h2v1h-2zM0 18h24v1h-24zM1 19h1v1h-1zM5 19h1v1h-1zM7 19h1v1h-1zM12 19h1v1h-1zM16 19h4v1h-4zM22 19h2v1h-2zM1 20h1v1h-1zM5 20h1v1h-1zM7 20h1v1h-1zM10 20h1v1h-1zM12 20h1v1h-1zM16 20h4v1h-4zM22 20h2v1h-2zM0 21h24v1h-24zM1 22h2v1h-2zM4 22h2v1h-2zM7 22h2v1h-2zM10 22h2v1h-2zM13 22h2v1h-2zM16 22h3v1h-3zM20 22h3v1h-3z"/><path fill="#999" d="M12 2h1v1h-1zM12 3h1v1h-1zM12 6h3v1h-3zM12 7h2v1h-2zM14 8h1v1h-1zM19 9h2v1h-2zM12 11h3v1h-3zM12 12h3v1h-3zM13 13h1v1h-1zM11 16h3v1h-3zM11 17h3v1h-3zM14 19h2v1h-2zM14 20h2v1h-2z"/></svg><span class="t" style="left:76.0px;top:541.9px;font-size:14.67px;transform:scaleX(0.9924);transform-origin:0 0;">Splitsystems_margined</span><svg width="10" height="14" viewBox="0 0 10 14" fill="none" style="left:33px;top:572.0px"><path d="M1.9 3V11.6L6.7 7.3Z" stroke="#a6a6a6" stroke-width="1.05"/></svg><svg width="24" height="24" viewBox="0 0 24 24" fill="none" style="left:47.7px;top:565.1px"><path d="M4.7 20L11.1 6.6Q11.6 5.4 12.1 6.6L18.6 20M7.8 14.5H15.4" stroke="#14afcd" stroke-width="2.3" stroke-linecap="round" stroke-linejoin="round"/></svg><span class="t" style="left:76.0px;top:566.9px;font-size:14.67px;transform:scaleX(0.9857);transform-origin:0 0;">Swing</span></div>
<div style="left:383px;top:162px;width:21px;height:592px;background:#e2e2e2;border:1px solid #adadad"></div>
<div style="left:383px;top:162px;width:21px;height:21px;background:#e2e2e2;border:1px solid #adadad"></div>
<div style="left:383px;top:733px;width:21px;height:21px;background:#e2e2e2;border:1px solid #adadad"></div>
<div style="left:384px;top:461px;width:19px;height:209px;background:#cdcdcd"></div>
<svg style="left:383px;top:161px" width="21" height="593" viewBox="0 0 21 593" fill="none"><path d="M6.4 13.6L10.5 9.6L14.6 13.6" stroke="#000" stroke-width="1.9"/><path d="M6.4 580.4L10.5 584.4L14.6 580.4" stroke="#000" stroke-width="1.9"/></svg>
<div style="left:0px;top:758px;width:410px;height:6px;background:#778899"></div>
<span class="t" style="left:-2.4px;top:766.9px;font-size:14.67px;transform:scaleX(1.0046);transform-origin:0 0;">Symbol Count</span>
<div style="left:-2px;top:791px;width:407px;height:39px;background:#f8f8f8;border:1px solid #b3b3b3"></div>
<div style="left:410px;top:14px;width:6px;height:810px;background:#778899"></div>
<div style="left:416px;top:14px;width:1px;height:810px;background:#62737b"></div>
<!-- strategy window -->
<div style="left:417px;top:14px;width:979px;height:810px;background:#6f8095"></div>
<div style="left:418px;top:16px;width:978px;height:808px;background:#8d9eb5"></div>
<div style="left:419px;top:16px;width:977px;height:808px;background:#b0c4de"></div>
<div style="left:419px;top:16px;width:977px;height:2px;background:#bccde6"></div>
<div style="left:423px;top:18px;width:973px;height:27px;background:#afc3dd"></div>
<svg style="left:426px;top:19px" width="24" height="24" viewBox="426 19 24 24" fill="none" stroke="#212529" stroke-width="1.5" stroke-linejoin="round" stroke-linecap="round"><path d="M437.4 22.4L445.8 26.2L437.4 29.9L429.2 26.2Z"/><path d="M430.6 29.6L429.2 30.6L437.4 34.4L445.8 30.6L444.4 29.6"/><path d="M430.6 34L429.2 35L437.4 39.1L445.8 35L444.4 34"/></svg>
<span class="t" style="left:450.6px;top:20.9px;font-size:15.7px;transform:scaleX(0.9402);transform-origin:0 0;">MetaStrategy Strategy - Rod\RXMsystem</span>
<div style="left:423px;top:44px;width:973px;height:1px;background:#d3deeb"></div>
<div style="left:423px;top:45px;width:973px;height:30px;background:#f5f5f5;border-left:1px solid #d5dfec"></div>
<div class="bd" style="left:429px;top:47px;width:68px;height:25px;"></div>
<div class="bd" style="left:502px;top:47px;width:102px;height:25px;"></div>
<div class="b" style="left:609px;top:47px;width:75px;height:25px;"></div>
<div class="b" style="left:689px;top:47px;width:81px;height:25px;"></div>
<div class="b" style="left:775px;top:47px;width:67px;height:25px;"></div>
<div class="sep" style="left:850px;top:50px;width:2px;height:20px;"></div>
<div style="left:858px;top:47px;width:129px;height:25px;background:#9bfa9b;border:1px solid #151515"></div>
<div style="left:992px;top:47px;width:82px;height:25px;background:#ffe4e1;border:1px solid #ff0000"></div>
<div class="sep" style="left:1081px;top:50px;width:2px;height:20px;"></div>
<div class="bd" style="left:1090px;top:47px;width:99px;height:25px;"></div>
<div class="sep" style="left:1196px;top:50px;width:2px;height:20px;"></div>
<svg style="left:423px;top:44px" width="800" height="31" viewBox="423 44 800 31" fill="none"><path d="M436.1 54.6Q436.1 53 437.70000000000005 53H447.5L450.90000000000003 56.4V66.2Q450.90000000000003 67.8 449.3 67.8H437.70000000000005Q436.1 67.8 436.1 66.2Z" fill="#8c8c8e"/><rect x="438.3" y="55" width="8.6" height="3.8" fill="#e3e3e3"/><circle cx="443.6" cy="63.4" r="2.1" fill="#e3e3e3"/><path d="M509.4 54.6Q509.4 53 511.0 53H520.8L524.1999999999999 56.4V66.2Q524.1999999999999 67.8 522.6 67.8H511.0Q509.4 67.8 509.4 66.2Z" fill="#8c8c8e"/><rect x="511.59999999999997" y="55" width="8.6" height="3.8" fill="#e3e3e3"/><circle cx="516.9" cy="63.4" r="2.1" fill="#e3e3e3"/>
<path d="M615.1 57.4Q615.1 56 616.5 56H617.6V64.6Q617.6 66.2 619.2 66.2H627.8V67.4Q627.8 68.8 626.4 68.8H616.5Q615.1 68.8 615.1 67.4Z" fill="#212529"/><rect x="619.2" y="51.9" width="12.9" height="12.7" rx="1.8" fill="#212529"/>
<path d="M706.6 59V57L702.8 53.4H698.2Q697.3 53.4 697.3 54.3V65.7Q697.3 66.6 698.2 66.6H705.7Q706.6 66.6 706.6 65.7V63.4M702.6 53.6V57.2H706.4" stroke="#212529" stroke-width="1.3"/><path d="M701.6 61.2H712M709.4 58.6L712 61.2L709.4 63.8" stroke="#212529" stroke-width="1.3"/>
<rect x="782.1" y="58.6" width="14.9" height="10.2" rx="1.6" fill="#212529"/><path d="M785.6 59V56.4A4 4 0 0 1 793.6 56.4V59" stroke="#212529" stroke-width="2.4"/><rect x="788.8" y="61.6" width="1.6" height="3.6" rx=".8" fill="#e1e1e1"/>
<circle cx="878.6" cy="59.7" r="8.5" fill="#212529"/><path d="M876.4 55.2L881 59.7L876.4 64.2" stroke="#9bfa9b" stroke-width="2.3"/>
<circle cx="1007.6" cy="60.3" r="7.5" stroke="#e0001a" stroke-width="2"/><path d="M1002.4 55L1012.8 65.6" stroke="#e0001a" stroke-width="2"/>
<g fill="#8c8c8e"><circle cx="1101.2" cy="55.8" r="3.6"/><circle cx="1107.2" cy="62.6" r="5.2"/></g>
<g stroke="#8c8c8e" stroke-width="2.1"><path d="M1101.2 50.8V60.8M1096.2 55.8H1106.2M1097.7 52.3L1104.7 59.3M1097.7 59.3L1104.7 52.3" stroke-width="1.8"/><path d="M1107.2 55.6V69.6M1100.2 62.6H1114.2M1102.2 57.6L1112.2 67.6M1102.2 67.6L1112.2 57.6"/></g>
<circle cx="1101.2" cy="55.8" r="1.5" fill="#e3e3e3"/><circle cx="1107.2" cy="62.6" r="2.3" fill="#e3e3e3"/>
</svg>
<span class="t" style="left:457.6px;top:49.8px;font-size:14.67px;color:#adadad;transform:scaleX(0.8901);transform-origin:0 0;">Save</span>
<span class="t" style="left:530.6px;top:49.8px;font-size:14.67px;color:#adadad;transform:scaleX(0.9155);transform-origin:0 0;">Save As ...</span>
<span class="t" style="left:637.5px;top:49.7px;font-size:14.67px;transform:scaleX(0.9622);transform-origin:0 0;">Clone</span>
<span class="t" style="left:717.9px;top:49.7px;font-size:14.67px;transform:scaleX(1.0124);transform-origin:0 0;">Export</span>
<span class="t" style="left:802.7px;top:49.7px;font-size:14.67px;transform:scaleX(0.9762);transform-origin:0 0;">Lock</span>
<span class="t" style="left:892.0px;top:50.3px;font-size:14.67px;transform:scaleX(0.9583);transform-origin:0 0;">Run Backtest</span>
<span class="t" style="left:1021.5px;top:49.7px;font-size:14.67px;transform:scaleX(0.9412);transform-origin:0 0;">Cancel</span>
<span class="t" style="left:1119.4px;top:49.5px;font-size:14.67px;color:#adadad;transform:scaleX(1.0352);transform-origin:0 0;">Optimize</span>
<div style="left:424px;top:75px;width:972px;height:749px;background:#d8edf5"></div>
<div style="left:424px;top:107px;width:972px;height:717px;background:#d8edf5;border-left:1px solid #b3b3b3;border-top:1px solid #b3b3b3"></div>
<div style="left:426px;top:77px;width:126px;height:30px;background:#e2e2e2;border:1px solid #b3b3b3;border-bottom:none"></div>
<div style="left:716px;top:77px;width:119px;height:30px;background:#e2e2e2;border:1px solid #b3b3b3;border-bottom:none"></div>
<div style="left:834px;top:77px;width:50px;height:30px;background:#e2e2e2;border:1px solid #b3b3b3;border-bottom:none"></div>
<div style="left:551px;top:75px;width:166px;height:34px;background:#fafafa;border:1px solid #b3b3b3;border-bottom:none"></div>
<span class="t" style="left:434.3px;top:82.7px;font-size:14.67px;transform:scaleX(1.0020);transform-origin:0 0;">Strategy Settings</span>
<span class="t" style="left:560.6px;top:81.6px;font-size:14.67px;transform:scaleX(1.0149);transform-origin:0 0;">MetaStrategy Settings</span>
<span class="t" style="left:721.4px;top:82.7px;font-size:14.67px;transform:scaleX(0.9664);transform-origin:0 0;">Backtest Results</span>
<span class="t" style="left:842.4px;top:82.7px;font-size:14.67px;transform:scaleX(0.9618);transform-origin:0 0;">Chart</span>
<div style="left:427px;top:111px;width:969px;height:35px;background:#f5f5f5"></div>
<span class="t" style="left:431.4px;top:116.3px;font-size:14.67px;transform:scaleX(0.9787);transform-origin:0 0;">Rebalance Frequency:</span>
<div class="b" style="left:585px;top:116px;width:125px;height:25px;"></div>
<span class="t" style="left:589.0px;top:117.7px;font-size:14.67px;transform:scaleX(1.0310);transform-origin:0 0;">Never</span>
<svg style="left:694px;top:122px" width="12" height="12" viewBox="0 0 12 12" fill="none"><path d="M2.4 4.2L5.6 7.4L8.8 4.2" stroke="#111" stroke-width="1.5"/></svg>
<div style="left:720px;top:119px;width:20px;height:20px;background:#e6e6e6;border:1px solid #b3b3b3"></div>
<span class="t" style="left:744.0px;top:120.1px;font-size:14.67px;transform:scaleX(1.0155);transform-origin:0 0;">Common Capital Pool</span>
<div style="left:899px;top:119px;width:20px;height:20px;background:#e6e6e6;border:1px solid #b3b3b3"></div>
<span class="t" style="left:922.3px;top:120.1px;font-size:14.67px;transform:scaleX(1.0094);transform-origin:0 0;">Inter-Strategy Signal Pruning</span>
<span class="t" style="left:431.4px;top:149.9px;font-size:14.67px;transform:scaleX(1.0169);transform-origin:0 0;">MetaStrategies backtest multiple Strategies at once. Each Strategy gets a percentage of the overall capital. MetaStrategies use the starting capital</span>
<!-- section 1 -->
<div style="left:427px;top:171px;width:969px;height:1px;background:#8091a5"></div>
<div style="left:427px;top:171px;width:1px;height:164px;background:#9fb0c2"></div>
<span class="t" style="left:435.7px;top:182.1px;font-size:20.6px;font-weight:700;transform:scaleX(1.1109);transform-origin:0 0;">Rod\Buy_VIXfilter</span>
<span class="t" style="left:435.5px;top:213.9px;font-size:14.67px;transform:scaleX(0.9788);transform-origin:0 0;">Position Size</span>
<div class="b" style="left:524px;top:213px;width:613px;height:25px;"></div>
<span class="t" style="left:529.7px;top:215.2px;font-size:14.67px;transform:scaleX(0.9716);transform-origin:0 0;">% Equity=100.00%</span>
<svg style="left:1120px;top:219.2px" width="12" height="12" viewBox="0 0 12 12" fill="none"><path d="M2.4 4.2L5.6 7.4L8.8 4.2" stroke="#111" stroke-width="1.5"/></svg>
<div class="b" style="left:436px;top:246px;width:83px;height:25px;"></div>
<svg style="left:502.4px;top:252.4px" width="12" height="12" viewBox="0 0 12 12" fill="none"><path d="M2.4 4.2L5.6 7.4L8.8 4.2" stroke="#111" stroke-width="1.5"/></svg>
<span class="t" style="left:440.8px;top:247.9px;font-size:14.67px;transform:scaleX(1.0061);transform-origin:0 0;">DataSet</span>
<div class="b" style="left:524px;top:246px;width:613px;height:25px;"></div>
<svg width="18.6" height="18.6" viewBox="0 0 24 24" style="left:528.6px;top:247.6px"><rect width="24" height="24" fill="#fdfdfd"/><path fill="#000" d="M0 1h1v1h-1zM14 1h1v1h-1zM16 1h2v1h-2zM7 3h3v1h-3zM19 3h1v1h-1zM4 4h3v1h-3zM14 4h1v1h-1zM22 4h1v1h-1zM20 5h1v1h-1zM0 6h1v1h-1zM3 6h1v1h-1zM5 6h2v1h-2zM9 6h2v1h-2zM19 6h2v1h-2zM0 7h1v1h-1zM2 7h2v1h-2zM5 7h2v1h-2zM9 7h1v1h-1zM16 7h2v1h-2zM19 7h2v1h-2zM22 7h1v1h-1zM0 9h1v1h-1zM2 9h2v1h-2zM5 9h1v1h-1zM8 9h1v1h-1zM11 9h1v1h-1zM23 9h1v1h-1zM0 10h1v1h-1zM3 10h1v1h-1zM5 10h1v1h-1zM8 10h1v1h-1zM11 10h1v1h-1zM1 11h11v1h-11zM19 11h2v1h-2zM0 12h12v1h-12zM17 12h6v1h-6zM0 13h12v1h-12zM14 13h1v1h-1zM17 13h2v1h-2zM20 13h4v1h-4zM0 14h4v1h-4zM9 14h15v1h-15zM0 15h24v1h-24zM1 16h1v1h-1zM4 16h1v1h-1zM7 16h2v1h-2zM10 16h1v1h-1zM14 16h2v1h-2zM18 16h2v1h-2zM22 16h2v1h-2zM1 17h2v1h-2zM4 17h1v1h-1zM7 17h2v1h-2zM10 17h1v1h-1zM14 17h2v1h-2zM18 17h2v1h-2zM22 17h2v1h-2zM0 18h24v1h-24zM1 19h1v1h-1zM5 19h1v1h-1zM7 19h1v1h-1zM12 19h1v1h-1zM16 19h4v1h-4zM22 19h2v1h-2zM1 20h1v1h-1zM5 20h1v1h-1zM7 20h1v1h-1zM10 20h1v1h-1zM12 20h1v1h-1zM16 20h4v1h-4zM22 20h2v1h-2zM0 21h24v1h-24zM1 22h2v1h-2zM4 22h2v1h-2zM7 22h2v1h-2zM10 22h2v1h-2zM13 22h2v1h-2zM16 22h3v1h-3zM20 22h3v1h-3z"/><path fill="#999" d="M12 2h1v1h-1zM12 3h1v1h-1zM12 6h3v1h-3zM12 7h2v1h-2zM14 8h1v1h-1zM19 9h2v1h-2zM12 11h3v1h-3zM12 12h3v1h-3zM13 13h1v1h-1zM11 16h3v1h-3zM11 17h3v1h-3zM14 19h2v1h-2zM14 20h2v1h-2z"/></svg>
<span class="t" style="left:551.4px;top:246.7px;font-size:14.67px;transform:scaleX(0.9914);transform-origin:0 0;">RXM</span>
<svg style="left:1120px;top:252.2px" width="12" height="12" viewBox="0 0 12 12" fill="none"><path d="M2.4 4.2L5.6 7.4L8.8 4.2" stroke="#111" stroke-width="1.5"/></svg>
<span class="t" style="left:436.2px;top:281.3px;font-size:14.67px;transform:scaleX(1.0030);transform-origin:0 0;">1 Symbol(s) Loaded</span>
<span class="t" style="left:1152.0px;top:213.5px;font-size:14.67px;transform:scaleX(1.0449);transform-origin:0 0;">Portfolio Weight</span>
<div style="left:1265px;top:213px;width:62px;height:25px;background:#fafafa;border:1px solid #a9c1e8"></div>
<span class="t" style="left:1292.6px;top:216.3px;font-size:14.67px;">1</span>
<div class="b" style="left:1305px;top:214px;width:21px;height:12px;border-color:#858585"></div>
<div class="b" style="left:1305px;top:225px;width:21px;height:12px;border-color:#858585"></div>
<svg style="left:1305px;top:214px" width="21" height="23" viewBox="0 0 21 23" fill="none"><path d="M6.4 8L10.5 4L14.6 8M6.4 14.6L10.5 18.6L14.6 14.6" stroke="#000" stroke-width="2.6"/></svg>
<span class="t" style="left:1332.6px;top:213.5px;font-size:14.67px;transform:scaleX(0.9283);transform-origin:0 0;">25%</span>
<span class="t" style="left:1152.4px;top:243.2px;font-size:14.67px;transform:scaleX(0.9340);transform-origin:0 0;">Scale</span>
<div class="b" style="left:1265px;top:246px;width:135px;height:25px;"></div>
<span class="t" style="left:1269.7px;top:247.4px;font-size:14.67px;transform:scaleX(1.0326);transform-origin:0 0;">Daily</span>
<span class="t" style="left:436.0px;top:308.7px;font-size:14.67px;transform:scaleX(1.0495);transform-origin:0 0;">Profit:</span>
<span class="t" style="left:480.2px;top:308.7px;font-size:14.67px;color:#128a22;transform:scaleX(0.9375);transform-origin:0 0;">0.00</span>
<span class="t" style="left:521.3px;top:308.7px;font-size:14.67px;transform:scaleX(1.0143);transform-origin:0 0;">Profit %</span>
<span class="t" style="left:579.0px;top:308.7px;font-size:14.67px;color:#128a22;transform:scaleX(0.9410);transform-origin:0 0;">0.00</span>
<span class="t" style="left:621.4px;top:308.7px;font-size:14.67px;transform:scaleX(0.8934);transform-origin:0 0;">APR</span>
<span class="t" style="left:653.5px;top:308.7px;font-size:14.67px;color:#128a22;transform:scaleX(0.9339);transform-origin:0 0;">0.00</span>
<span class="t" style="left:695.4px;top:308.7px;font-size:14.67px;transform:scaleX(0.9733);transform-origin:0 0;">Win Rate: 0.00</span>
<span class="t" style="left:805.6px;top:308.7px;font-size:14.67px;transform:scaleX(0.9757);transform-origin:0 0;">Sharpe Ratio: 0.00</span>
<span class="t" style="left:940.2px;top:308.7px;font-size:14.67px;transform:scaleX(1.0009);transform-origin:0 0;">Correlation: 0.00</span>
<span class="t" style="left:1063.1px;top:308.7px;font-size:14.67px;transform:scaleX(0.9811);transform-origin:0 0;">Positions: 0</span>
<span class="t" style="left:1152.0px;top:308.7px;font-size:14.67px;transform:scaleX(0.9357);transform-origin:0 0;">NSF: 0</span>
<!-- section 2 -->
<div style="left:427px;top:334px;width:969px;height:2px;background:#6f8095"></div>
<div style="left:427px;top:335px;width:1px;height:164px;background:#9fb0c2"></div>
<span class="t" style="left:435.7px;top:345.1px;font-size:20.6px;font-weight:700;transform:scaleX(1.1177);transform-origin:0 0;">Rod\Buy_VIXfilterwithEMA</span>
<span class="t" style="left:435.5px;top:377.9px;font-size:14.67px;transform:scaleX(0.9788);transform-origin:0 0;">Position Size</span>
<div class="b" style="left:524px;top:377px;width:613px;height:25px;"></div>
<span class="t" style="left:529.7px;top:379.2px;font-size:14.67px;transform:scaleX(0.9716);transform-origin:0 0;">% Equity=100.00%</span>
<svg style="left:1120px;top:383.2px" width="12" height="12" viewBox="0 0 12 12" fill="none"><path d="M2.4 4.2L5.6 7.4L8.8 4.2" stroke="#111" stroke-width="1.5"/></svg>
<div class="b" style="left:436px;top:409px;width:83px;height:25px;"></div>
<svg style="left:502.4px;top:415.4px" width="12" height="12" viewBox="0 0 12 12" fill="none"><path d="M2.4 4.2L5.6 7.4L8.8 4.2" stroke="#111" stroke-width="1.5"/></svg>
<span class="t" style="left:440.8px;top:411.9px;font-size:14.67px;transform:scaleX(1.0061);transform-origin:0 0;">DataSet</span>
<div class="b" style="left:524px;top:409px;width:613px;height:25px;"></div>
<svg width="18.6" height="18.6" viewBox="0 0 24 24" style="left:528.6px;top:410.6px"><rect width="24" height="24" fill="#fdfdfd"/><path fill="#000" d="M0 1h1v1h-1zM14 1h1v1h-1zM16 1h2v1h-2zM7 3h3v1h-3zM19 3h1v1h-1zM4 4h3v1h-3zM14 4h1v1h-1zM22 4h1v1h-1zM20 5h1v1h-1zM0 6h1v1h-1zM3 6h1v1h-1zM5 6h2v1h-2zM9 6h2v1h-2zM19 6h2v1h-2zM0 7h1v1h-1zM2 7h2v1h-2zM5 7h2v1h-2zM9 7h1v1h-1zM16 7h2v1h-2zM19 7h2v1h-2zM22 7h1v1h-1zM0 9h1v1h-1zM2 9h2v1h-2zM5 9h1v1h-1zM8 9h1v1h-1zM11 9h1v1h-1zM23 9h1v1h-1zM0 10h1v1h-1zM3 10h1v1h-1zM5 10h1v1h-1zM8 10h1v1h-1zM11 10h1v1h-1zM1 11h11v1h-11zM19 11h2v1h-2zM0 12h12v1h-12zM17 12h6v1h-6zM0 13h12v1h-12zM14 13h1v1h-1zM17 13h2v1h-2zM20 13h4v1h-4zM0 14h4v1h-4zM9 14h15v1h-15zM0 15h24v1h-24zM1 16h1v1h-1zM4 16h1v1h-1zM7 16h2v1h-2zM10 16h1v1h-1zM14 16h2v1h-2zM18 16h2v1h-2zM22 16h2v1h-2zM1 17h2v1h-2zM4 17h1v1h-1zM7 17h2v1h-2zM10 17h1v1h-1zM14 17h2v1h-2zM18 17h2v1h-2zM22 17h2v1h-2zM0 18h24v1h-24zM1 19h1v1h-1zM5 19h1v1h-1zM7 19h1v1h-1zM12 19h1v1h-1zM16 19h4v1h-4zM22 19h2v1h-2zM1 20h1v1h-1zM5 20h1v1h-1zM7 20h1v1h-1zM10 20h1v1h-1zM12 20h1v1h-1zM16 20h4v1h-4zM22 20h2v1h-2zM0 21h24v1h-24zM1 22h2v1h-2zM4 22h2v1h-2zM7 22h2v1h-2zM10 22h2v1h-2zM13 22h2v1h-2zM16 22h3v1h-3zM20 22h3v1h-3z"/><path fill="#999" d="M12 2h1v1h-1zM12 3h1v1h-1zM12 6h3v1h-3zM12 7h2v1h-2zM14 8h1v1h-1zM19 9h2v1h-2zM12 11h3v1h-3zM12 12h3v1h-3zM13 13h1v1h-1zM11 16h3v1h-3zM11 17h3v1h-3zM14 19h2v1h-2zM14 20h2v1h-2z"/></svg>
<span class="t" style="left:551.4px;top:410.7px;font-size:14.67px;transform:scaleX(0.9914);transform-origin:0 0;">RXM</span>
<svg style="left:1120px;top:415.2px" width="12" height="12" viewBox="0 0 12 12" fill="none"><path d="M2.4 4.2L5.6 7.4L8.8 4.2" stroke="#111" stroke-width="1.5"/></svg>
<span class="t" style="left:436.2px;top:445.3px;font-size:14.67px;transform:scaleX(1.0030);transform-origin:0 0;">1 Symbol(s) Loaded</span>
<span class="t" style="left:1152.0px;top:377.5px;font-size:14.67px;transform:scaleX(1.0449);transform-origin:0 0;">Portfolio Weight</span>
<div style="left:1265px;top:377px;width:62px;height:25px;background:#fafafa;border:1px solid #a9c1e8"></div>
<span class="t" style="left:1292.6px;top:380.3px;font-size:14.67px;">1</span>
<div class="b" style="left:1305px;top:378px;width:21px;height:12px;border-color:#858585"></div>
<div class="b" style="left:1305px;top:389px;width:21px;height:12px;border-color:#858585"></div>
<svg style="left:1305px;top:378px" width="21" height="23" viewBox="0 0 21 23" fill="none"><path d="M6.4 8L10.5 4L14.6 8M6.4 14.6L10.5 18.6L14.6 14.6" stroke="#000" stroke-width="2.6"/></svg>
<span class="t" style="left:1332.6px;top:377.5px;font-size:14.67px;transform:scaleX(0.9283);transform-origin:0 0;">25%</span>
<span class="t" style="left:1152.4px;top:407.2px;font-size:14.67px;transform:scaleX(0.9340);transform-origin:0 0;">Scale</span>
<div class="b" style="left:1265px;top:409px;width:135px;height:25px;"></div>
<span class="t" style="left:1269.7px;top:411.4px;font-size:14.67px;transform:scaleX(1.0326);transform-origin:0 0;">Daily</span>
<span class="t" style="left:436.0px;top:472.7px;font-size:14.67px;transform:scaleX(1.0495);transform-origin:0 0;">Profit:</span>
<span class="t" style="left:480.2px;top:472.7px;font-size:14.67px;color:#128a22;transform:scaleX(0.9375);transform-origin:0 0;">0.00</span>
<span class="t" style="left:521.3px;top:472.7px;font-size:14.67px;transform:scaleX(1.0143);transform-origin:0 0;">Profit %</span>
<span class="t" style="left:579.0px;top:472.7px;font-size:14.67px;color:#128a22;transform:scaleX(0.9410);transform-origin:0 0;">0.00</span>
<span class="t" style="left:621.4px;top:472.7px;font-size:14.67px;transform:scaleX(0.8934);transform-origin:0 0;">APR</span>
<span class="t" style="left:653.5px;top:472.7px;font-size:14.67px;color:#128a22;transform:scaleX(0.9339);transform-origin:0 0;">0.00</span>
<span class="t" style="left:695.4px;top:472.7px;font-size:14.67px;transform:scaleX(0.9733);transform-origin:0 0;">Win Rate: 0.00</span>
<span class="t" style="left:805.6px;top:472.7px;font-size:14.67px;transform:scaleX(0.9757);transform-origin:0 0;">Sharpe Ratio: 0.00</span>
<span class="t" style="left:940.2px;top:472.7px;font-size:14.67px;transform:scaleX(1.0009);transform-origin:0 0;">Correlation: 0.00</span>
<span class="t" style="left:1063.1px;top:472.7px;font-size:14.67px;transform:scaleX(0.9811);transform-origin:0 0;">Positions: 0</span>
<span class="t" style="left:1152.0px;top:472.7px;font-size:14.67px;transform:scaleX(0.9357);transform-origin:0 0;">NSF: 0</span>
<!-- section 3 -->
<div style="left:427px;top:497px;width:969px;height:2px;background:#6f8095"></div>
<div style="left:427px;top:498px;width:1px;height:164px;background:#9fb0c2"></div>
<span class="t" style="left:435.7px;top:508.9px;font-size:20.6px;font-weight:700;transform:scaleX(1.1051);transform-origin:0 0;">Rod\Buy_VIXCONTfilterwithEMA</span>
<span class="t" style="left:435.5px;top:540.9px;font-size:14.67px;transform:scaleX(0.9788);transform-origin:0 0;">Position Size</span>
<div class="b" style="left:524px;top:540px;width:613px;height:25px;"></div>
<span class="t" style="left:529.7px;top:542.2px;font-size:14.67px;transform:scaleX(0.9716);transform-origin:0 0;">% Equity=100.00%</span>
<svg style="left:1120px;top:546.2px" width="12" height="12" viewBox="0 0 12 12" fill="none"><path d="M2.4 4.2L5.6 7.4L8.8 4.2" stroke="#111" stroke-width="1.5"/></svg>
<div class="b" style="left:436px;top:573px;width:83px;height:25px;"></div>
<svg style="left:502.4px;top:579.4px" width="12" height="12" viewBox="0 0 12 12" fill="none"><path d="M2.4 4.2L5.6 7.4L8.8 4.2" stroke="#111" stroke-width="1.5"/></svg>
<span class="t" style="left:441.6px;top:574.9px;font-size:14.67px;transform:scaleX(0.9997);transform-origin:0 0;">Symbol</span>
<div style="left:524px;top:570px;width:613px;height:30px;background:#fafafa;border:1px solid #b3b3b3"></div>
<span class="t" style="left:527.3px;top:571.8px;font-size:14.67px;transform:scaleX(0.9545);transform-origin:0 0;">RXMINDEX</span>
<span class="t" style="left:436.0px;top:607.7px;font-size:14.67px;color:#f0141e;transform:scaleX(1.0204);transform-origin:0 0;">Need to Load Data</span>
<span class="t" style="left:1152.0px;top:540.5px;font-size:14.67px;transform:scaleX(1.0449);transform-origin:0 0;">Portfolio Weight</span>
<div style="left:1265px;top:540px;width:62px;height:25px;background:#fafafa;border:1px solid #a9c1e8"></div>
<span class="t" style="left:1292.6px;top:543.3px;font-size:14.67px;">1</span>
<div class="b" style="left:1305px;top:541px;width:21px;height:12px;border-color:#858585"></div>
<div class="b" style="left:1305px;top:552px;width:21px;height:12px;border-color:#858585"></div>
<svg style="left:1305px;top:541px" width="21" height="23" viewBox="0 0 21 23" fill="none"><path d="M6.4 8L10.5 4L14.6 8M6.4 14.6L10.5 18.6L14.6 14.6" stroke="#000" stroke-width="2.6"/></svg>
<span class="t" style="left:1332.6px;top:540.5px;font-size:14.67px;transform:scaleX(0.9283);transform-origin:0 0;">25%</span>
<span class="t" style="left:1152.4px;top:570.2px;font-size:14.67px;transform:scaleX(0.9340);transform-origin:0 0;">Scale</span>
<div class="b" style="left:1265px;top:573px;width:135px;height:25px;"></div>
<span class="t" style="left:1269.7px;top:574.4px;font-size:14.67px;transform:scaleX(1.0326);transform-origin:0 0;">Daily</span>
<span class="t" style="left:436.0px;top:635.7px;font-size:14.67px;transform:scaleX(1.0495);transform-origin:0 0;">Profit:</span>
<span class="t" style="left:480.2px;top:635.7px;font-size:14.67px;color:#128a22;transform:scaleX(0.9375);transform-origin:0 0;">0.00</span>
<span class="t" style="left:521.3px;top:635.7px;font-size:14.67px;transform:scaleX(1.0143);transform-origin:0 0;">Profit %</span>
<span class="t" style="left:579.0px;top:635.7px;font-size:14.67px;color:#128a22;transform:scaleX(0.9410);transform-origin:0 0;">0.00</span>
<span class="t" style="left:621.4px;top:635.7px;font-size:14.67px;transform:scaleX(0.8934);transform-origin:0 0;">APR</span>
<span class="t" style="left:653.5px;top:635.7px;font-size:14.67px;color:#128a22;transform:scaleX(0.9339);transform-origin:0 0;">0.00</span>
<span class="t" style="left:695.4px;top:635.7px;font-size:14.67px;transform:scaleX(0.9733);transform-origin:0 0;">Win Rate: 0.00</span>
<span class="t" style="left:805.6px;top:635.7px;font-size:14.67px;transform:scaleX(0.9757);transform-origin:0 0;">Sharpe Ratio: 0.00</span>
<span class="t" style="left:940.2px;top:635.7px;font-size:14.67px;transform:scaleX(1.0009);transform-origin:0 0;">Correlation: 0.00</span>
<span class="t" style="left:1063.1px;top:635.7px;font-size:14.67px;transform:scaleX(0.9811);transform-origin:0 0;">Positions: 0</span>
<span class="t" style="left:1152.0px;top:635.7px;font-size:14.67px;transform:scaleX(0.9357);transform-origin:0 0;">NSF: 0</span>
<!-- section 4 -->
<div style="left:427px;top:661px;width:969px;height:2px;background:#6f8095"></div>
<div style="left:427px;top:662px;width:1px;height:164px;background:#9fb0c2"></div>
<span class="t" style="left:435.7px;top:672.1px;font-size:20.6px;font-weight:700;transform:scaleX(1.1130);transform-origin:0 0;">Rod\Buy_VIX_VIX3Mfilter</span>
<span class="t" style="left:435.5px;top:704.9px;font-size:14.67px;transform:scaleX(0.9788);transform-origin:0 0;">Position Size</span>
<div class="b" style="left:524px;top:704px;width:613px;height:25px;"></div>
<span class="t" style="left:529.7px;top:706.2px;font-size:14.67px;transform:scaleX(0.9716);transform-origin:0 0;">% Equity=100.00%</span>
<svg style="left:1120px;top:710.2px" width="12" height="12" viewBox="0 0 12 12" fill="none"><path d="M2.4 4.2L5.6 7.4L8.8 4.2" stroke="#111" stroke-width="1.5"/></svg>
<div class="b" style="left:436px;top:736px;width:83px;height:25px;"></div>
<svg style="left:502.4px;top:742.4px" width="12" height="12" viewBox="0 0 12 12" fill="none"><path d="M2.4 4.2L5.6 7.4L8.8 4.2" stroke="#111" stroke-width="1.5"/></svg>
<span class="t" style="left:441.6px;top:738.9px;font-size:14.67px;transform:scaleX(0.9997);transform-origin:0 0;">Symbol</span>
<div style="left:524px;top:734px;width:613px;height:30px;background:#fafafa;border:1px solid #b3b3b3"></div>
<span class="t" style="left:527.3px;top:735.8px;font-size:14.67px;transform:scaleX(0.9545);transform-origin:0 0;">RXMINDEX</span>
<span class="t" style="left:436.0px;top:771.7px;font-size:14.67px;color:#f0141e;transform:scaleX(1.0204);transform-origin:0 0;">Need to Load Data</span>
<span class="t" style="left:1152.0px;top:704.5px;font-size:14.67px;transform:scaleX(1.0449);transform-origin:0 0;">Portfolio Weight</span>
<div style="left:1265px;top:704px;width:62px;height:25px;background:#fafafa;border:1px solid #a9c1e8"></div>
<span class="t" style="left:1292.6px;top:707.3px;font-size:14.67px;">1</span>
<div class="b" style="left:1305px;top:705px;width:21px;height:12px;border-color:#858585"></div>
<div class="b" style="left:1305px;top:716px;width:21px;height:12px;border-color:#858585"></div>
<svg style="left:1305px;top:705px" width="21" height="23" viewBox="0 0 21 23" fill="none"><path d="M6.4 8L10.5 4L14.6 8M6.4 14.6L10.5 18.6L14.6 14.6" stroke="#000" stroke-width="2.6"/></svg>
<span class="t" style="left:1332.6px;top:704.5px;font-size:14.67px;transform:scaleX(0.9283);transform-origin:0 0;">25%</span>
<span class="t" style="left:1152.4px;top:734.2px;font-size:14.67px;transform:scaleX(0.9340);transform-origin:0 0;">Scale</span>
<div class="b" style="left:1265px;top:736px;width:135px;height:25px;"></div>
<span class="t" style="left:1269.7px;top:738.4px;font-size:14.67px;transform:scaleX(1.0326);transform-origin:0 0;">Daily</span>
<span class="t" style="left:436.0px;top:799.7px;font-size:14.67px;transform:scaleX(1.0495);transform-origin:0 0;">Profit:</span>
<span class="t" style="left:480.2px;top:799.7px;font-size:14.67px;color:#128a22;transform:scaleX(0.9375);transform-origin:0 0;">0.00</span>
<span class="t" style="left:521.3px;top:799.7px;font-size:14.67px;transform:scaleX(1.0143);transform-origin:0 0;">Profit %</span>
<span class="t" style="left:579.0px;top:799.7px;font-size:14.67px;color:#128a22;transform:scaleX(0.9410);transform-origin:0 0;">0.00</span>
<span class="t" style="left:621.4px;top:799.7px;font-size:14.67px;transform:scaleX(0.8934);transform-origin:0 0;">APR</span>
<span class="t" style="left:653.5px;top:799.7px;font-size:14.67px;color:#128a22;transform:scaleX(0.9339);transform-origin:0 0;">0.00</span>
<span class="t" style="left:695.4px;top:799.7px;font-size:14.67px;transform:scaleX(0.9733);transform-origin:0 0;">Win Rate: 0.00</span>
<span class="t" style="left:805.6px;top:799.7px;font-size:14.67px;transform:scaleX(0.9757);transform-origin:0 0;">Sharpe Ratio: 0.00</span>
<span class="t" style="left:940.2px;top:799.7px;font-size:14.67px;transform:scaleX(1.0009);transform-origin:0 0;">Correlation: 0.00</span>
<span class="t" style="left:1063.1px;top:799.7px;font-size:14.67px;transform:scaleX(0.9811);transform-origin:0 0;">Positions: 0</span>
<span class="t" style="left:1152.0px;top:799.7px;font-size:14.67px;transform:scaleX(0.9357);transform-origin:0 0;">NSF: 0</span>
</div>
</body></html>
